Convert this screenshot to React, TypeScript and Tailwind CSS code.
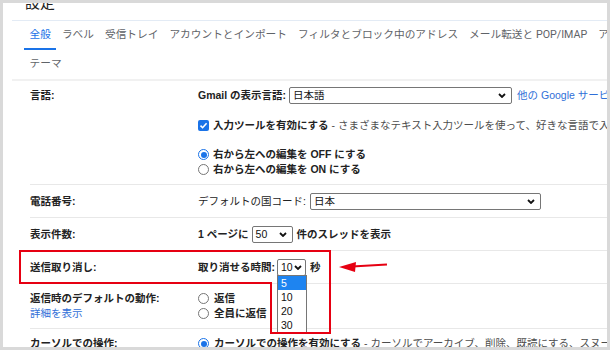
import React from 'react';

const FONT = { fontFamily: '"Liberation Sans", "Noto Sans CJK JP", sans-serif' };

function Chevron() {
  return (
    <svg width="8" height="5" viewBox="0 0 8 5" className="shrink-0">
      <path d="M1 1 L4 4 L7 1" fill="none" stroke="#111" strokeWidth="1.8" />
    </svg>
  );
}

function Select({ className, value, children }: { className: string; value: string; children?: React.ReactNode }) {
  return (
    <span className={`relative flex items-center justify-between h-[17px] border border-[#767676] rounded-[2px] bg-white pl-[3px] pr-[5px] font-normal text-[#111] ${className}`}>
      <span>{value}</span>
      <Chevron />
      {children}
    </span>
  );
}

function Radio({ checked }: { checked?: boolean }) {
  return checked ? (
    <span className="w-[11px] h-[11px] rounded-full border border-[#1a73e8] bg-white flex items-center justify-center shrink-0">
      <span className="w-[6px] h-[6px] rounded-full bg-[#1a73e8]" />
    </span>
  ) : (
    <span className="w-[11px] h-[11px] rounded-full border border-[#767676] bg-white shrink-0" />
  );
}

function Checkbox() {
  return (
    <span className="w-[11px] h-[11px] rounded-[2px] bg-[#1a73e8] flex items-center justify-center shrink-0">
      <svg width="9" height="9" viewBox="0 0 9 9">
        <path d="M1.5 4.6 L3.6 6.7 L7.6 2.2" fill="none" stroke="#fff" strokeWidth="1.6" />
      </svg>
    </span>
  );
}

const tabs = ['全般', 'ラベル', '受信トレイ', 'アカウントとインポート', 'フィルタとブロック中のアドレス', 'メール転送と POP/IMAP', 'アドオン', 'テーマ'];

export default function App() {
  return (
    <div className="relative w-[610px] h-[350px] border-[3px] border-[#d9d9d9] overflow-hidden bg-white text-[#222]" style={FONT}>
      {/* Title */}
      <div className="pl-[22px] mt-[-9px] text-[15px] leading-[15px] h-[15px] text-[#222]" style={{ fontFamily: '"Noto Sans CJK JP", sans-serif' }}>
        設定
      </div>
      <div className="ml-[9px] mt-[11px] border-t border-[#e3ebf5]" />

      {/* Tabs */}
      <div className="pl-[21px] w-[665px] flex flex-wrap text-[10.7px] text-[#5f6368]" style={{ fontFamily: 'Roboto, "Noto Sans CJK JP", sans-serif' }}>
        {tabs.map((t, i) => (
          <div key={t} className={`relative h-[29px] px-[5.5px] flex items-center whitespace-nowrap ${i === 0 ? 'text-[#1a73e8]' : ''}`}>
            {t}
            {i === 0 && <span className="absolute left-0 right-0 bottom-0 h-[2px] bg-[#1a73e8]" />}
          </div>
        ))}
      </div>
      <div className="ml-[9px] border-t-2 border-[#f1f1f1]" />

      {/* Settings rows */}
      <div className="ml-[27px] text-[10.5px] leading-[15px] whitespace-nowrap">
        {/* 言語 */}
        <div className="flex border-b border-[#e8e8e8] pt-[6px] pb-[7px]">
          <div className="w-[168px] shrink-0 h-[17px] flex items-center font-bold">言語:</div>
          <div className="flex flex-col">
            <div className="flex items-center h-[17px] font-bold">
              <span>Gmail の表示言語:</span>
              <Select className="ml-[3px] w-[223px]" value="日本語" />
              <span className="ml-[5px] font-normal text-[#2f6fd8]">他の Google サービスで使用する言語を変更</span>
            </div>
            <div className="flex items-center h-[15px] mt-[14px]">
              <Checkbox />
              <span className="ml-[4px] font-bold">入力ツールを有効にする</span>
              <span className="text-[#4d4d4d]">&nbsp;- さまざまなテキスト入力ツールを使って、好きな言語で入力できます</span>
            </div>
            <div className="flex items-center h-[15px] mt-[14px] font-bold">
              <Radio checked />
              <span className="ml-[4px]">右から左への編集を OFF にする</span>
            </div>
            <div className="flex items-center h-[15px] font-bold">
              <Radio />
              <span className="ml-[4px]">右から左への編集を ON にする</span>
            </div>
          </div>
        </div>

        {/* 電話番号 */}
        <div className="flex border-b border-[#e8e8e8] py-[7.5px]">
          <div className="w-[168px] shrink-0 h-[17px] flex items-center font-bold">電話番号:</div>
          <div className="flex items-center h-[17px]">
            <span>デフォルトの国コード:</span>
            <Select className="ml-[4px] w-[231px]" value="日本" />
          </div>
        </div>

        {/* 表示件数 */}
        <div className="flex border-b border-[#e8e8e8] py-[7.5px]">
          <div className="w-[168px] shrink-0 h-[17px] flex items-center font-bold">表示件数:</div>
          <div className="flex items-center h-[17px] font-bold">
            <span>1 ページに</span>
            <Select className="ml-[3px] w-[41px]" value="50" />
            <span className="ml-[4px]">件のスレッドを表示</span>
          </div>
        </div>

        {/* 送信取り消し */}
        <div className="flex border-b border-[#e8e8e8] py-[7.5px]">
          <div className="w-[168px] shrink-0 h-[17px] flex items-center font-bold">送信取り消し:</div>
          <div className="flex items-center h-[17px] font-bold">
            <span>取り消せる時間:</span>
            <Select className="ml-[2px] w-[29px] !pr-[3px]" value="10">
              <span className="absolute left-[-1px] top-[15px] w-[30px] border border-[#767676] bg-white z-10 flex flex-col">
                {['5', '10', '20', '30'].map((n, i) => (
                  <span key={n} className={`h-[14px] leading-[14px] pl-[3px] ${i === 0 ? 'bg-[#1e84f0] text-white' : ''}`}>{n}</span>
                ))}
              </span>
            </Select>
            <span className="ml-[4px]">秒</span>
          </div>
        </div>

        {/* 返信時のデフォルトの動作 */}
        <div className="flex border-b border-[#e8e8e8] py-[7px]">
          <div className="w-[168px] shrink-0 flex flex-col">
            <span className="font-bold">返信時のデフォルトの動作:</span>
            <span className="text-[#2f6fd8]">詳細を表示</span>
          </div>
          <div className="flex flex-col font-bold">
            <div className="flex items-center h-[15px]">
              <Radio />
              <span className="ml-[5px]">返信</span>
            </div>
            <div className="flex items-center h-[15px]">
              <Radio />
              <span className="ml-[5px]">全員に返信</span>
            </div>
          </div>
        </div>

        {/* カーソルでの操作 */}
        <div className="flex py-[7px]">
          <div className="w-[168px] shrink-0 font-bold">カーソルでの操作:</div>
          <div className="flex items-center h-[15px]">
            <Radio checked />
            <span className="ml-[5px] font-bold">カーソルでの操作を有効にする</span>
            <span className="text-[#4d4d4d]">&nbsp;- カーソルでアーカイブ、削除、既読にする、スヌーズをすばやく実行できます</span>
          </div>
        </div>
      </div>

      {/* Red annotation */}
      <svg className="absolute left-[-3px] top-[-3px] pointer-events-none z-20" width="610" height="350" viewBox="0 0 610 350">
        <path d="M20 251 H330 V333 H271 V283 H20 Z" fill="none" stroke="#e60012" strokeWidth="2" />
        <path d="M352 266.6 L387 264.5" stroke="#e60012" strokeWidth="2" />
        <path d="M339 267 L356 262 L355 272 Z" fill="#e60012" />
      </svg>
    </div>
  );
}
